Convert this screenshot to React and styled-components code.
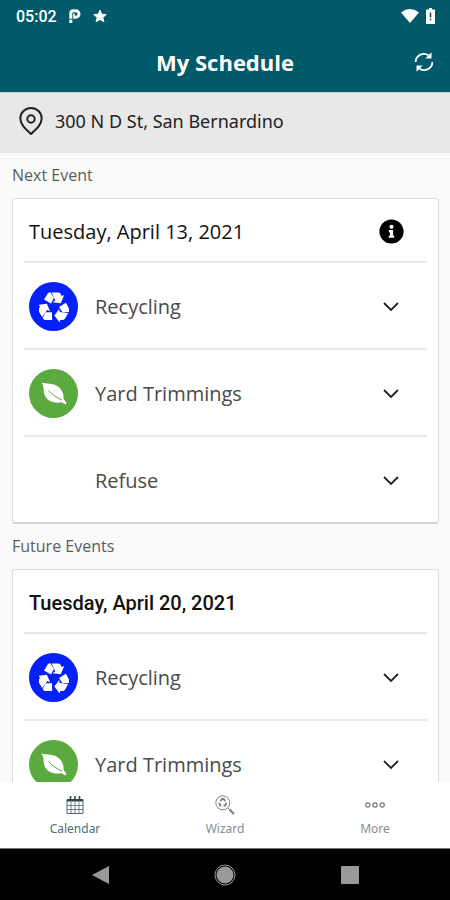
import React, { useState } from 'react'
import styled, { createGlobalStyle } from 'styled-components'
import { FaInfoCircle } from 'react-icons/fa'

const GlobalStyle = createGlobalStyle`
    *{
        box-sizing: border-box;
        margin: 0;
        padding: 0;
    }
    body{
        font-family: "Open Sans", "Noto Sans", sans-serif;
        background-color: #fafafa;
        color: #222;
    }
    button{
        font: inherit;
        color: inherit;
        border: none;
        background: none;
        cursor: pointer;
    }
    svg{
        display: block;
    }
`
const Screen = styled.div`
    height: 100vh;
    display: flex;
    flex-direction: column;
`
const StatusBar = styled.div`
    height: 32px;
    padding: 0 15px 0 16px;
    display: flex;
    align-items: center;
    justify-content: space-between;
    flex-shrink: 0;
    color: white;
    background-color: #005a69;
    font-family: Roboto, sans-serif;
    font-size: 16px;
    font-weight: 500;
`
const StatusGroup = styled.div`
    display: flex;
    align-items: center;
    gap: ${({ $gap }) => $gap || "12px"};
`
const Header = styled.header`
    height: 60px;
    padding: 0 14px;
    display: grid;
    grid-template-columns: 24px 1fr 24px;
    align-items: center;
    flex-shrink: 0;
    color: white;
    background-color: #005a69;
`
const Title = styled.h1`
    grid-column: 2;
    font-size: 22px;
    line-height: 30px;
    font-weight: 700;
    text-align: center;
`
const IconButton = styled.button`
    display: flex;
    align-items: center;
    justify-content: center;
`
const AddressBar = styled.div`
    height: 61px;
    padding: 0 16px 4px;
    display: flex;
    align-items: center;
    flex-shrink: 0;
    gap: 9px;
    border-top: 1px solid #c4cfd1;
    background-color: #e8e8e8;
    font-family: "Noto Sans", sans-serif;
    font-size: 18px;
    line-height: 26px;
`
const Content = styled.main`
    flex: 1;
    min-height: 0;
    padding: 0 11px 0 12px;
    overflow-y: auto;
    scrollbar-width: none;
`
const SectionTitle = styled.h2`
    height: 45px;
    font-size: 16px;
    line-height: 45px;
    font-weight: 400;
    color: #5c5c5c;
`
const Card = styled.section`
    padding: 0 11px;
    border: 1px solid #dcdcdc;
    border-bottom: 2px solid #d4d4d4;
    border-radius: 3px;
    background-color: white;
`
const CardHeader = styled.div`
    height: 62px;
    padding: 3px 23px 0 5px;
    display: flex;
    align-items: center;
    justify-content: space-between;
`
const EventDate = styled.h3`
    font-family: ${({ $future }) => $future ? "Roboto" : "Open Sans"}, sans-serif;
    font-size: 20px;
    line-height: 28px;
    font-weight: ${({ $future }) => $future ? 500 : 400};
    color: #111;
`
const EventList = styled.ul`
    list-style: none;
`
const EventItem = styled.li`
    border-top: 2px solid #e8e8e8;
`
const EventButton = styled.button`
    width: 100%;
    height: 85px;
    padding: 2px 28px 0 5px;
    display: grid;
    grid-template-columns: 49px 1fr 16px;
    align-items: center;
    column-gap: 17px;
    text-align: left;
    font-size: 20px;
    line-height: 28px;
    color: #4a4a4a;
`
const Badge = styled.span`
    width: 49px;
    height: 49px;
    display: flex;
    align-items: center;
    justify-content: center;
    border-radius: 50%;
    color: white;
    background-color: ${({ $color }) => $color || "transparent"};
`
const Chevron = styled.svg`
    transform: ${({ $open }) => $open ? "rotate(180deg)" : "none"};
`
const Details = styled.p`
    padding: 0 28px 16px 71px;
    font-size: 16px;
    color: #555;
`
const TabBar = styled.nav`
    height: 66px;
    padding: 13px 0 0;
    display: grid;
    grid-template-columns: repeat(3, 1fr);
    flex-shrink: 0;
    background-color: white;
`
const Tab = styled.button`
    display: flex;
    flex-direction: column;
    align-items: center;
    gap: 5px;
    color: ${({ $active }) => $active ? "#4a7078" : "#8c8c8c"};
`
const TabLabel = styled.span`
    font-family: "Noto Sans", sans-serif;
    font-size: 12px;
    line-height: 18px;
`
const SystemBar = styled.div`
    height: 52px;
    display: flex;
    align-items: center;
    justify-content: center;
    gap: 105px;
    flex-shrink: 0;
    border-top: 1px solid #777;
    background-color: black;
`

const ParkingIcon = () => (
    <svg width="12" height="14" viewBox="0 0 12 14" fill="none" stroke="white" strokeWidth="3">
        <path d="M1.8 14V4.5Q1.8 1.8 4.5 1.8H6.8a2.9 2.9 0 0 1 0 6.400H5" />
        <path d="M5 4.500v5" strokeWidth="1.6" />
        <path d="M0 10.200h3.600" stroke="#005a69" strokeWidth="1" />
    </svg>
)
const StarIcon = () => (
    <svg width="14" height="14" viewBox="0 0 15 14" fill="white" stroke="white" strokeLinejoin="round">
        <path d="M7.5.8l1.900 4.300 4.800.4-3.700 3.100 1.200 4.600-4.200-2.500-4.200 2.500 1.200-4.600L.8 5.500l4.800-.4z" />
    </svg>
)
const WifiIcon = () => (
    <svg width="18" height="14" viewBox="0 0 18 14" fill="white">
        <path d="M0 3.400Q9-3.200 18 3.400L9 14z" />
    </svg>
)
const BatteryIcon = () => (
    <svg width="9" height="16" viewBox="0 0 9 16">
        <path d="M3 0h3v1.500h2.200q.8 0 .8.8v12.900q0 .8-.8.8H.8q-.8 0-.8-.8V2.300q0-.8.8-.8H3z" fill="white" />
        <path d="M4.500 4.500v5M4.500 10.700v1.600" stroke="#005a69" strokeWidth="1.6" />
    </svg>
)
const RefreshIcon = () => (
    <svg width="20" height="20" viewBox="0 0 20 20" fill="none" stroke="white" strokeWidth="1.8">
        <path d="M1.600 10A8.300 8.300 0 0 1 14.500 3.300M18.400 10A8.300 8.300 0 0 1 5.500 16.700" />
        <path d="M17.500.3v6.200h-6.200zM2.500 19.700v-6.200h6.200z" fill="white" stroke="none" />
    </svg>
)
const PinIcon = () => (
    <svg width="30" height="30" viewBox="0 0 30 30" fill="none" stroke="#222" strokeWidth="2" strokeLinejoin="round">
        <path d="M15 28C9.600 23 4.300 18.300 4.300 12.600a10.700 10.700 0 0 1 21.400 0C25.700 18.300 20.400 23 15 28z" />
        <circle cx="15" cy="13" r="3.7" />
    </svg>
)
const RecycleIcon = () => (
    <svg width="30" height="30" viewBox="-1 0 30 30" fill="white">
        {[0, 120, 240].map((angle) => (
            <g key={angle} transform={`rotate(${angle} 14 15.5)`}>
                <path d="M4 7.600L7.800 1.400Q8.800.2 10.600.4L14 5.800 11 11.400z" />
                <path d="M11.700.4H18Q19.700.4 20.400 1.600L21.700 4 24.200 2.900 20.800 11.200 12.600 10.200 15.200 8.400z" />
            </g>
        ))}
    </svg>
)
const LeafIcon = () => (
    <svg width="26" height="24" viewBox="0 0 26 24">
        <path d="M.5.5C6 2.300 11.500.5 17 4.500c4.500 3.500 5.700 7.500 5.700 12.800l2.800 3.500-1 1.800-4-2.300C14 21.500 7.500 20 4.300 14.500 1.700 10 3.800 5.500.5.5z" fill="white" />
        <path d="M7.500 8.500c4 4.500 8 7 13.500 9.500" fill="none" stroke="#5aaa40" strokeWidth="1" />
    </svg>
)
const CalendarIcon = () => (
    <svg width="18" height="20" viewBox="0 0 18 20" fill="none" stroke="#567">
        <path d="M1 4.500h16v14H1z" />
        <path d="M1 4h16v2.500H1z" fill="#345" stroke="none" />
        <path d="M4.500 1v4M9 1v4M13.500 1v4" stroke="#345" strokeWidth="1.6" />
        <path d="M5 7v11.500M9 7v11.500M13 7v11.500M1 10.500h16M1 14.500h16" strokeWidth=".8" />
    </svg>
)
const WizardIcon = () => (
    <svg width="20" height="20" viewBox="0 0 20 20" fill="none" stroke="#808080">
        <circle cx="7.8" cy="7.8" r="7" />
        <path d="M5.500 6.200l1.300-2.200h2l1.300 2.200M11.300 7.800l-1 2.700H8.500M6.500 10.500H5.200l-1-2.700" strokeWidth="1.8" />
        <path d="M12.800 12.800l2 2" />
        <path d="M14.500 14.500l4.500 4.500" strokeWidth="2.2" />
    </svg>
)
const MoreIcon = () => (
    <svg width="20" height="20" viewBox="0 0 20 20" fill="none" stroke="#777" strokeWidth="1.2">
        <circle cx="2.8" cy="10" r="2.1" />
        <circle cx="10" cy="10" r="2.1" />
        <circle cx="17.2" cy="10" r="2.1" />
    </svg>
)

const services = {
    recycling: { name: "Recycling", color: "#0520fa", icon: <RecycleIcon /> },
    yard: { name: "Yard Trimmings", color: "#5aaa40", icon: <LeafIcon /> },
    refuse: { name: "Refuse" },
}
const tabs = [
    { name: "Calendar", icon: <CalendarIcon /> },
    { name: "Wizard", icon: <WizardIcon /> },
    { name: "More", icon: <MoreIcon /> },
]

const Event = ({ service, date }) => {
    const [open, setOpen] = useState(false)
    const { name, color, icon } = services[service]
    return (
        <EventItem>
            <EventButton type="button" aria-expanded={open} onClick={() => setOpen(!open)}>
                <Badge $color={color}>{icon}</Badge>
                <span>{name}</span>
                <Chevron $open={open} width="16" height="10" viewBox="0 0 16 10" fill="none" stroke="#222" strokeWidth="1.8">
                    <path d="M1 1l7 7 7-7" />
                </Chevron>
            </EventButton>
            {open ? <Details>{date}</Details> : null}
        </EventItem>
    )
}

const EventCard = ({ date, events, future }) => (
    <Card>
        <CardHeader>
            <EventDate $future={future}>{date}</EventDate>
            {!future ? <IconButton type="button" aria-label="Information"><FaInfoCircle size={25} color="black" /></IconButton> : null}
        </CardHeader>
        <EventList>
            {events.map((service) => <Event key={service} service={service} date={date} />)}
        </EventList>
    </Card>
)

export default function App() {
    const [activeTab, setActiveTab] = useState("Calendar")
    return (
        <Screen>
            <GlobalStyle />
            <StatusBar>
                <StatusGroup>
                    <span>05:02</span>
                    <ParkingIcon />
                    <StarIcon />
                </StatusGroup>
                <StatusGroup $gap="7px">
                    <WifiIcon />
                    <BatteryIcon />
                </StatusGroup>
            </StatusBar>
            <Header>
                <Title>My Schedule</Title>
                <IconButton type="button" aria-label="Refresh"><RefreshIcon /></IconButton>
            </Header>
            <AddressBar>
                <PinIcon />
                <span>300 N D St, San Bernardino</span>
            </AddressBar>
            <Content>
                <SectionTitle>Next Event</SectionTitle>
                <EventCard date="Tuesday, April 13, 2021" events={["recycling", "yard", "refuse"]} />
                <SectionTitle>Future Events</SectionTitle>
                <EventCard future date="Tuesday, April 20, 2021" events={["recycling", "yard"]} />
            </Content>
            <TabBar>
                {tabs.map(({ name, icon }) => (
                    <Tab key={name} type="button" $active={activeTab === name} onClick={() => setActiveTab(name)}>
                        {icon}
                        <TabLabel>{name}</TabLabel>
                    </Tab>
                ))}
            </TabBar>
            <SystemBar>
                <IconButton type="button" aria-label="Back">
                    <svg width="17" height="18" viewBox="0 0 17 18" fill="#999"><path d="M17 0v18L0 9z" /></svg>
                </IconButton>
                <IconButton type="button" aria-label="Home">
                    <svg width="22" height="22" viewBox="0 0 22 22" fill="#999">
                        <circle cx="11" cy="11" r="8.5" />
                        <circle cx="11" cy="11" r="10" fill="none" stroke="#999" />
                    </svg>
                </IconButton>
                <IconButton type="button" aria-label="Recent apps">
                    <svg width="18" height="18" viewBox="0 0 18 18" fill="#999"><rect width="18" height="18" rx="1" /></svg>
                </IconButton>
            </SystemBar>
        </Screen>
    )
}
